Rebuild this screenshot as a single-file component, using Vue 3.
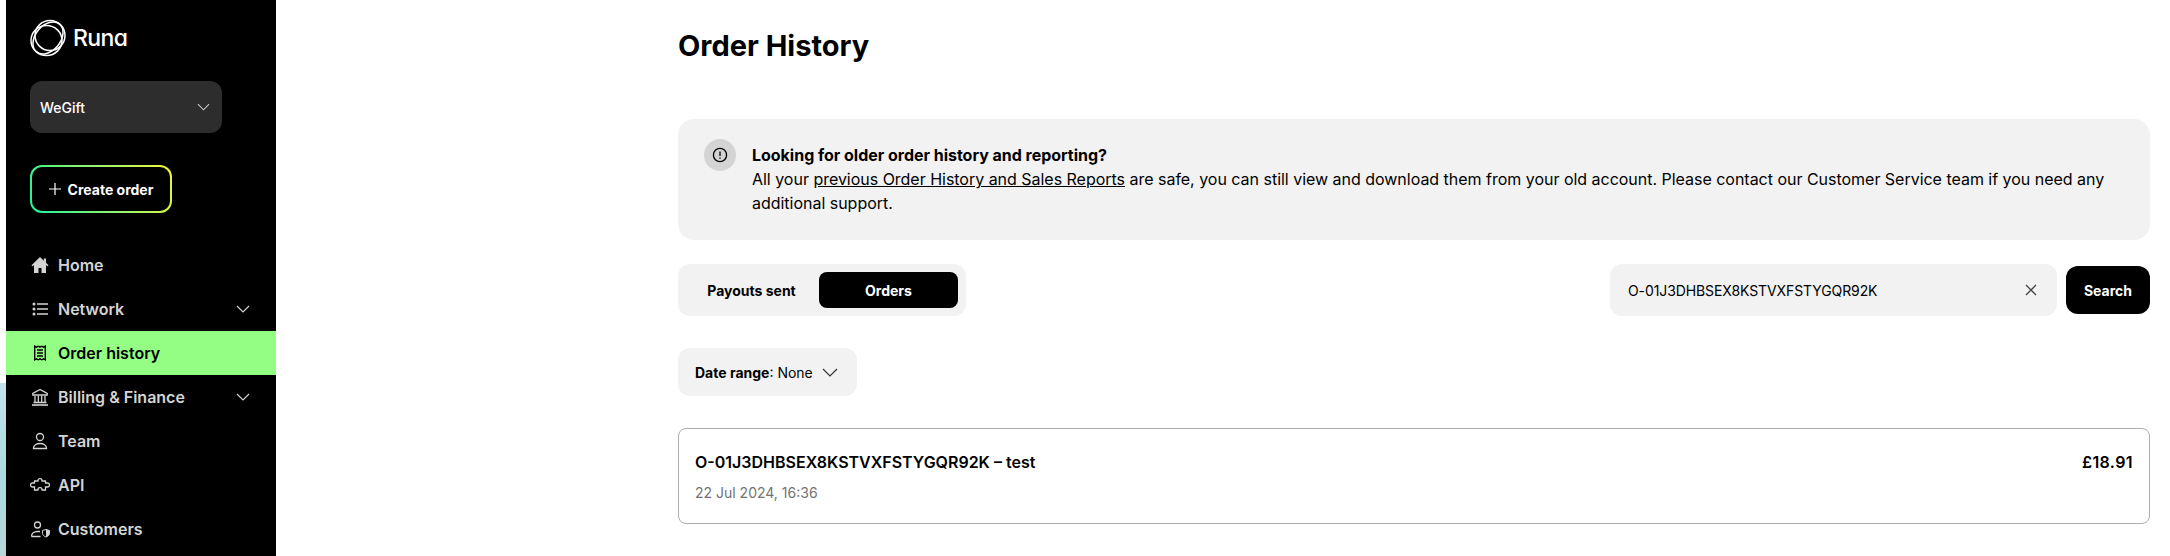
<script setup>
import { ref } from "vue";

const searchValue = ref("O-01J3DHBSEX8KSTVXFSTYGQR92K");

const navItems = [
	{ name: "Home", icon: "home" },
	{ name: "Network", icon: "list", arrow: true },
	{ name: "Order history", icon: "receipt", active: true },
	{ name: "Billing & Finance", icon: "bank", arrow: true },
	{ name: "Team", icon: "user" },
	{ name: "API", icon: "puzzle" },
	{ name: "Customers", icon: "customer" },
];
</script>

<template>
	<div class="page">
		<div class="edge"></div>
		<aside class="sidebar">
			<div class="logo">
				<svg class="logo-mark" viewBox="0 0 36 38" fill="none" stroke="#fff" stroke-width="1.5">
					<ellipse cx="20" cy="16.500" rx="15" ry="15" />
					<ellipse cx="16.500" cy="21.500" rx="15.500" ry="15" />
					<ellipse cx="18" cy="19" rx="18" ry="12.500" transform="rotate(-50 18 19)" />
				</svg>
				<span class="logo-text">Runa</span>
			</div>

			<div class="account">
				<span>WeGift</span>
				<svg class="chev-sm" viewBox="0 0 14 8" fill="none" stroke="#c9c9c9" stroke-width="1.2">
					<path d="M1 1l6 6 6-6" />
				</svg>
			</div>

			<button class="create-btn">
				<span class="create-inner">
					<svg class="plus" viewBox="0 0 12 12" fill="none" stroke="#fff" stroke-width="1.2">
						<path d="M6 0v12M0 6h12" />
					</svg>
					Create order
				</span>
			</button>

			<nav class="nav">
				<a v-for="item in navItems" :key="item.name" class="nav-item" :class="{ active: item.active }">
					<svg class="nav-icon" viewBox="0 0 20 20" fill="none" stroke="currentColor" stroke-width="1.3">
						<path v-if="item.icon === 'home'" fill="currentColor" stroke="none" d="M10 2L1.500 10.200l1 1L4 9.900V18h4.500v-5h3v5H16V9.900l1.500 1.300 1-1-2.500-2.400V3.500h-2.200v2.300z" />
						<template v-if="item.icon === 'list'">
							<path stroke-width="1.4" d="M7 5h11M7 10h11M7 15h11" />
							<circle fill="currentColor" stroke="none" cx="4" cy="5" r="1.500" />
							<circle fill="currentColor" stroke="none" cx="4" cy="10" r="1.500" />
							<circle fill="currentColor" stroke="none" cx="4" cy="15" r="1.500" />
						</template>
						<template v-if="item.icon === 'receipt'">
							<path stroke-width="1.4" d="M4.700 3.200l1.770 1 1.770-1 1.760 1 1.770-1 1.760 1 1.770-1v13.600l-1.770-1-1.760 1-1.770-1-1.760 1-1.770-1-1.770 1z" />
							<path stroke-width="1.5" d="M7 7h6M7 10h6M7 13h6" />
						</template>
						<template v-if="item.icon === 'bank'">
							<path d="M10 2.500L2.800 6.500V8h14.400V6.500z" />
							<path d="M5 9v6M8.300 9v6M11.700 9v6M15 9v6M3.500 15.500h13" />
							<path stroke-width="1.600" d="M2 18h16" />
						</template>
						<template v-if="item.icon === 'user'">
							<circle cx="10" cy="6" r="3.500" />
							<path d="M3.500 17.500V17c0-2.500 3-4.500 6.500-4.500s6.500 2 6.500 4.500v.5z" />
						</template>
						<path v-if="item.icon === 'puzzle'" d="M4.500 6H8v-.5a2 1.800 0 0 1 4 0V6h3.500v2h2a2 2 0 0 1 0 4h-2v3H12v-.5a2 1.800 0 0 0-4 0v.5H4.500v-3h-2a2 2 0 0 1 0-4h2z" />
						<template v-if="item.icon === 'customer'">
							<circle cx="7.500" cy="6" r="3" />
							<path d="M1.500 17.500c0-3 2.500-5 6-5h2.500M1.500 17.500h9" />
							<path stroke-width="1" d="M12.500 11.500l3.500-1 3.500 1v3c0 1.500-2 3-3.500 3.500-1.500-.5-3.500-2-3.500-3.500z" />
							<path fill="currentColor" stroke="none" d="M16 10.500l3.500 1v3c0 1.500-2 3-3.500 3.500z" />
						</template>
					</svg>
					<span class="nav-label">{{ item.name }}</span>
					<svg v-if="item.arrow" class="nav-arrow" viewBox="0 0 14 8" fill="none" stroke="#d4d4d4" stroke-width="1.2">
						<path d="M1 1l6 6 6-6" />
					</svg>
				</a>
			</nav>
		</aside>

		<main class="content">
			<h1 class="title">Order History</h1>

			<section class="notice">
				<span class="notice-icon">
					<svg viewBox="0 0 16 16" fill="none" stroke="#000" stroke-width="1.3">
						<circle cx="8" cy="8" r="6.600" />
						<path d="M8 4.500v4.500M8 10.500v1.300" />
					</svg>
				</span>
				<div class="notice-text">
					<div class="notice-head">Looking for older order history and reporting?</div>
					<p>
						All your <a class="link">previous Order History and Sales Reports</a> are safe, you can still view and download them from your old account. Please contact our Customer Service team if you need any additional support.
					</p>
				</div>
			</section>

			<div class="toolbar">
				<div class="tabs">
					<button class="tab">Payouts sent</button>
					<button class="tab selected">Orders</button>
				</div>
				<div class="search">
					<div class="search-box">
						<input v-model="searchValue" class="search-input" />
						<svg class="clear" viewBox="0 0 12 12" fill="none" stroke="#444" stroke-width="1.3">
							<path d="M1 1l10 10M11 1L1 11" />
						</svg>
					</div>
					<button class="search-btn">Search</button>
				</div>
			</div>

			<button class="date-filter">
				<span><b>Date range</b>: None</span>
				<svg class="date-chev" viewBox="0 0 16 9" fill="none" stroke="#333" stroke-width="1.2">
					<path d="M1 1l7 7 7-7" />
				</svg>
			</button>

			<div class="order-card">
				<div>
					<div class="order-name">O-01J3DHBSEX8KSTVXFSTYGQR92K – test</div>
					<div class="order-date">22 Jul 2024, 16:36</div>
				</div>
				<div class="order-price">£18.91</div>
			</div>
		</main>
	</div>
</template>

<style>
html,
body {
	margin: 0;
	background: #fff;
}
</style>

<style scoped>
.page {
	display: flex;
	height: 556px;
	overflow: hidden;
	font-family: Inter, "Liberation Sans", sans-serif;
	color: #000;
}

.edge {
	width: 6px;
	flex-shrink: 0;
	background: linear-gradient(#fff 0, #fff 383px, #c3e3ea 383px, #a9dadf 480px, #b9d6d6 556px);
}

.sidebar {
	width: 270px;
	flex-shrink: 0;
	background: #000;
	color: #fff;
}

.logo {
	display: flex;
	align-items: center;
	gap: 7px;
	height: 38px;
	margin: 19px 0 0 24px;
}

.logo-mark {
	width: 36px;
	height: 38px;
}

.logo-text {
	font-size: 23px;
	font-weight: 500;
	font-feature-settings: "cv11";
	letter-spacing: -0.6px;
}

.account {
	display: flex;
	align-items: center;
	justify-content: space-between;
	width: 192px;
	height: 52px;
	box-sizing: border-box;
	margin: 24px 0 0 24px;
	padding: 0 12px 0 10px;
	border-radius: 12px;
	background: #2d2d2d;
	font-size: 14px;
	font-weight: 500;
}

.chev-sm {
	width: 13px;
	height: 8px;
}

.create-btn {
	display: block;
	width: 142px;
	height: 48px;
	margin: 32px 0 0 24px;
	padding: 2px;
	border: 0;
	border-radius: 12px;
	background: linear-gradient(60deg, #1df29a 0%, #9cf46c 55%, #f2f538 100%);
	font-family: inherit;
}

.create-inner {
	display: flex;
	align-items: center;
	justify-content: center;
	gap: 7px;
	height: 100%;
	border-radius: 10px;
	background: #000;
	color: #fff;
	font-size: 14px;
	font-weight: 700;
}

.plus {
	width: 12px;
	height: 12px;
}

.nav {
	margin-top: 30px;
}

.nav-item {
	display: flex;
	align-items: center;
	height: 44px;
	padding: 0 25px 0 24px;
	color: #d4d4d4;
	font-size: 16px;
	font-weight: 600;
}

.nav-item.active {
	background: #94fe84;
	color: #000;
}

.nav-icon {
	width: 20px;
	height: 20px;
	margin-right: 8px;
	flex-shrink: 0;
}

.nav-label {
	flex: 1;
}

.nav-arrow {
	width: 14px;
	height: 8px;
	margin-right: 1px;
}

.content {
	flex: 1;
	padding: 0 20px 0 402px;
	min-width: 0;
}

.title {
	margin: 29px 0 0;
	font-size: 29px;
	line-height: 34px;
	font-weight: 700;
}

.notice {
	display: flex;
	gap: 16px;
	height: 121px;
	box-sizing: border-box;
	margin-top: 56px;
	padding: 20px 26px;
	border-radius: 16px;
	background: #f2f2f2;
	font-size: 16px;
	line-height: 24px;
}

.notice-icon {
	display: flex;
	align-items: center;
	justify-content: center;
	flex-shrink: 0;
	width: 32px;
	height: 32px;
	border-radius: 50%;
	background: #d4d4d4;
}

.notice-icon svg {
	width: 16px;
	height: 16px;
}

.notice-text {
	margin-top: 4px;
	letter-spacing: -0.02px;
}

.notice-head {
	font-weight: 700;
}

.notice-text p {
	margin: 0;
}

.link {
	text-decoration: underline;
}

.toolbar {
	display: flex;
	justify-content: space-between;
	margin-top: 24px;
}

.tabs {
	display: flex;
	align-items: center;
	gap: 6px;
	height: 52px;
	box-sizing: border-box;
	padding: 0 8px;
	border-radius: 12px;
	background: #f2f2f2;
}

.tab {
	height: 36px;
	padding: 0;
	border: 0;
	border-radius: 8px;
	background: none;
	font-family: inherit;
	font-size: 14px;
	font-weight: 700;
	color: #000;
}

.tab:first-child {
	width: 127px;
	padding-left: 4px;
}

.tab.selected {
	width: 139px;
	background: #000;
	color: #fff;
}

.search {
	display: flex;
	align-items: center;
	gap: 9px;
}

.search-box {
	display: flex;
	align-items: center;
	width: 447px;
	height: 52px;
	box-sizing: border-box;
	padding: 0 20px 0 18px;
	border-radius: 12px;
	background: #f2f2f2;
}

.search-input {
	flex: 1;
	min-width: 0;
	border: 0;
	outline: 0;
	padding: 0;
	background: none;
	font-family: inherit;
	font-size: 14px;
	letter-spacing: -0.1px;
	color: #000;
}

.clear {
	width: 12px;
	height: 12px;
}

.search-btn {
	width: 84px;
	height: 48px;
	border: 0;
	border-radius: 12px;
	background: #000;
	color: #fff;
	font-family: inherit;
	font-size: 14px;
	font-weight: 700;
}

.date-filter {
	display: flex;
	align-items: center;
	gap: 9px;
	height: 48px;
	margin-top: 32px;
	padding: 0 18px 0 17px;
	border: 0;
	border-radius: 12px;
	background: #f2f2f2;
	font-family: inherit;
	font-size: 14px;
	color: #000;
}

.date-filter b {
	font-weight: 700;
}

.date-chev {
	width: 16px;
	height: 9px;
	margin-right: 1px;
}

.order-card {
	display: flex;
	justify-content: space-between;
	height: 96px;
	box-sizing: border-box;
	margin-top: 32px;
	padding: 22px 16px;
	border: 1px solid #adadad;
	border-radius: 8px;
}

.order-name {
	font-size: 16px;
	line-height: 22px;
	font-weight: 600;
}

.order-date {
	margin-top: 10px;
	font-size: 14px;
	line-height: 20px;
	color: #737373;
}

.order-price {
	font-size: 16px;
	line-height: 22px;
	font-weight: 600;
	letter-spacing: 0.4px;
}
</style>
